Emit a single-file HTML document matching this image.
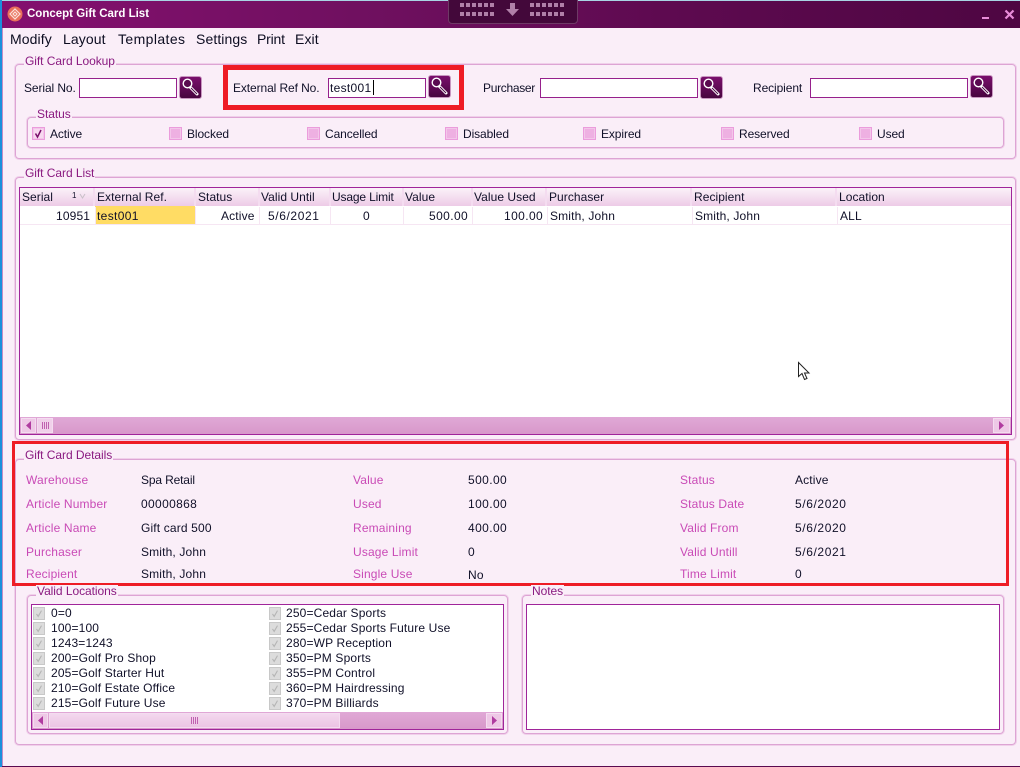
<!DOCTYPE html>
<html><head><meta charset="utf-8"><style>
html,body{margin:0;padding:0;width:1020px;height:767px;overflow:hidden;background:#faeef8}
body{position:relative;font:12px/14px "Liberation Sans",sans-serif;color:#101028;letter-spacing:.15px}
div,span,svg{position:absolute;box-sizing:border-box}
span{white-space:nowrap}
.g{border:1px solid #dda4d4;border-radius:4px;box-shadow:0 0 0 1px #f0d0ea}
.lg{color:#8a1a80;background:#faeef8;padding:0 1px 0 1px;line-height:13px;letter-spacing:-.05px}
.in{background:#fff;border:1px solid #96208c;height:20px}
.b{width:23px;height:23px;border-radius:3px;background:linear-gradient(#7a0f6c,#47053f);border:1px solid #c896c0}
.c{width:13px;height:13px;background:#eeb0e2;border:1px solid #eb9cdc;box-shadow:inset 0 0 0 1px #f3c6ea}
.k{width:12px;height:13px;background:#dcdcdc;border:1px solid #c8c8c8}
.l{color:#c94ab6}
.t{letter-spacing:-.1px}
.d{letter-spacing:.6px}
.h{top:188px;height:18px;background:linear-gradient(#fbf2f9,#edcbe7);border-right:2px solid #f4dcf0}
.hl{top:190px;letter-spacing:.05px}
.r{top:209px}
.m{font-size:14px;line-height:16px;top:31px;letter-spacing:.1px;color:#0c0c20}
.cl{position:absolute;top:207px;height:17px;width:1px;background:#f6e6f3}
</style></head><body>
<svg width="0" height="0"><defs>
<symbol id="mg" viewBox="0 0 21 21"><path d="M10.500 10.500l6.500 6.500" stroke="#fff" stroke-width="3" stroke-linecap="round"/><path d="M11 11l6 6" stroke="#47053f" stroke-width="1"/><circle cx="7.500" cy="6.500" r="4.300" fill="#5a0a50" stroke="#fff" stroke-width="1.400"/></symbol>
<symbol id="ck" viewBox="0 0 12 13"><path d="M3 7l2 3 4-7" fill="none" stroke="#b4b4b4" stroke-width="1.300"/></symbol>
</defs></svg>

<!-- title bar -->
<div style="left:0;top:0;width:1020px;height:1px;background:#a8d4e4"></div>
<div style="left:2px;top:1px;width:1018px;height:27px;background:linear-gradient(90deg,#84106f 0,#701060 35%,#5e0a50 65%,#4e0642 100%)"></div>
<div style="left:0;top:0;width:2px;height:767px;background:#1a8fdc"></div>
<div style="left:2px;top:28px;width:1px;height:738px;background:#c48cc4"></div>
<div style="left:2px;top:766px;width:1018px;height:1px;background:#5a0a50"></div>
<svg style="left:7px;top:6px" width="16" height="16" viewBox="0 0 16 16"><circle cx="8" cy="8" r="7.500" fill="#e8705c"/><path d="M8 3l5 5-5 5-5-5z M8 6l2 2-2 2-2-2z" fill="none" stroke="#fbe0d8" stroke-width="1.200"/></svg>
<span style="left:27px;top:7px;color:#fff;font-weight:bold;font-size:11.500px;letter-spacing:0">Concept Gift Card List</span>
<div style="left:448px;top:-4px;width:130px;height:28px;background:#43083a;border:1px solid #6e3a66;border-radius:4px"></div>
<svg style="left:460px;top:3px" width="110" height="16" viewBox="0 0 110 16"><g fill="#b080a8"><path d="M0 0h4v4H0zM6 0h4v4H6zM12 0h4v4h-4zM18 0h4v4h-4zM24 0h4v4h-4zM30 0h4v4h-4zM0 9h4v4H0zM6 9h4v4H6zM12 9h4v4h-4zM18 9h4v4h-4zM24 9h4v4h-4zM30 9h4v4h-4zM70 0h4v4h-4zM76 0h4v4h-4zM82 0h4v4h-4zM88 0h4v4h-4zM94 0h4v4h-4zM100 0h4v4h-4zM70 9h4v4h-4zM76 9h4v4h-4zM82 9h4v4h-4zM88 9h4v4h-4zM94 9h4v4h-4zM100 9h4v4h-4z"/><path d="M50 0h5v6h4l-6.500 7L46 6h4z"/></g></svg>
<div style="left:982px;top:17px;width:7px;height:2px;background:#e88cd8"></div>
<svg style="left:1004px;top:9px" width="11" height="11" viewBox="0 0 11 11"><path d="M1.500 1.500l8 8M9.500 1.500l-8 8" stroke="#e88cd8" stroke-width="2.200"/></svg>

<!-- menu -->
<span class="m" style="left:10px">Modify</span>
<span class="m" style="left:63px">Layout</span>
<span class="m" style="left:118px;letter-spacing:.4px">Templates</span>
<span class="m" style="left:196px">Settings</span>
<span class="m" style="left:257px;letter-spacing:-.2px">Print</span>
<span class="m" style="left:295px">Exit</span>

<!-- lookup -->
<div class="g" style="left:15px;top:64px;width:1001px;height:95px"></div>
<span class="lg" style="left:24px;top:55px">Gift Card Lookup</span>
<span class="t" style="left:24px;top:81px">Serial No.</span>
<div class="in" style="left:79px;top:78px;width:98px"></div>
<div class="b" style="left:179px;top:76px"><svg width="21" height="21"><use href="#mg"/></svg></div>
<span class="t" style="left:233px;top:81px">External Ref No.</span>
<div class="in" style="left:328px;top:78px;width:98px"></div>
<span style="left:330px;top:81px;letter-spacing:.3px">test001</span>
<div style="left:373px;top:80px;width:1px;height:15px;background:#000"></div>
<div class="b" style="left:428px;top:75px"><svg width="21" height="21"><use href="#mg"/></svg></div>
<div style="left:223px;top:65px;width:241px;height:45px;border:5px solid #ee1c25"></div>
<span class="t" style="left:483px;top:81px;letter-spacing:-.3px">Purchaser</span>
<div class="in" style="left:540px;top:78px;width:158px"></div>
<div class="b" style="left:700px;top:76px"><svg width="21" height="21"><use href="#mg"/></svg></div>
<span class="t" style="left:753px;top:81px">Recipient</span>
<div class="in" style="left:810px;top:78px;width:158px"></div>
<div class="b" style="left:970px;top:75px"><svg width="21" height="21"><use href="#mg"/></svg></div>

<div class="g" style="left:27px;top:117px;width:977px;height:31px"></div>
<span class="lg" style="left:36px;top:108px">Status</span>
<div class="c" style="left:32px;top:127px;background:#f8d8f0"></div>
<svg style="left:32px;top:127px" width="13" height="13" viewBox="0 0 13 13"><path d="M3.500 6.500l2 3.500 3.500-7" fill="none" stroke="#7a0f6c" stroke-width="1.500"/></svg>
<span class="t" style="left:50px;top:127px">Active</span>
<div class="c" style="left:169px;top:127px"></div><span class="t" style="left:187px;top:127px">Blocked</span>
<div class="c" style="left:307px;top:127px"></div><span class="t" style="left:325px;top:127px">Cancelled</span>
<div class="c" style="left:445px;top:127px"></div><span class="t" style="left:463px;top:127px">Disabled</span>
<div class="c" style="left:583px;top:127px"></div><span class="t" style="left:601px;top:127px">Expired</span>
<div class="c" style="left:721px;top:127px"></div><span class="t" style="left:739px;top:127px">Reserved</span>
<div class="c" style="left:859px;top:127px"></div><span class="t" style="left:877px;top:127px">Used</span>

<!-- list -->
<div class="g" style="left:15px;top:177px;width:1001px;height:263px"></div>
<span class="lg" style="left:24px;top:167px">Gift Card List</span>
<div style="left:19px;top:187px;width:993px;height:248px;background:#fff;border:1px solid #a0249a"></div>
<div class="h" style="left:20px;width:75px"></div>
<div class="h" style="left:95px;width:101px"></div>
<div class="h" style="left:196px;width:64px"></div>
<div class="h" style="left:260px;width:71px"></div>
<div class="h" style="left:331px;width:73px"></div>
<div class="h" style="left:404px;width:69px"></div>
<div class="h" style="left:473px;width:74px"></div>
<div class="h" style="left:547px;width:145px"></div>
<div class="h" style="left:692px;width:145px"></div>
<div class="h" style="left:837px;width:174px;border-right:0"></div>
<span class="hl" style="left:22px">Serial</span>
<span style="left:72px;top:191px;font-size:8px;line-height:10px">1</span>
<svg style="left:79px;top:193px" width="7" height="6" viewBox="0 0 7 6"><path d="M1 1l2.500 4L6 1" fill="none" stroke="#c8c0c8"/></svg>
<span class="hl" style="left:97px">External Ref.</span>
<span class="hl" style="left:198px">Status</span>
<span class="hl" style="left:261px">Valid Until</span>
<span class="hl" style="left:332px;letter-spacing:-.15px">Usage Limit</span>
<span class="hl" style="left:405px">Value</span>
<span class="hl" style="left:474px">Value Used</span>
<span class="hl" style="left:549px">Purchaser</span>
<span class="hl" style="left:694px">Recipient</span>
<span class="hl" style="left:839px">Location</span>
<div style="left:95px;top:206px;width:100px;height:18px;background:#ffdc64"></div>
<div style="left:20px;top:224px;width:991px;height:1px;background:#f6e6f3"></div>
<div class="cl" style="left:95px"></div><div class="cl" style="left:195px"></div><div class="cl" style="left:259px"></div><div class="cl" style="left:330px"></div><div class="cl" style="left:403px"></div><div class="cl" style="left:472px"></div><div class="cl" style="left:547px"></div><div class="cl" style="left:692px"></div><div class="cl" style="left:837px"></div>
<span class="r" style="left:56px">10951</span>
<span class="r" style="left:97px;letter-spacing:.35px">test001</span>
<span class="r" style="left:221px">Active</span>
<span class="r d" style="left:268px">5/6/2021</span>
<span class="r" style="left:363px">0</span>
<span class="r" style="left:429px;letter-spacing:.4px">500.00</span>
<span class="r" style="left:504px;letter-spacing:.4px">100.00</span>
<span class="r" style="left:550px">Smith, John</span>
<span class="r" style="left:695px">Smith, John</span>
<span class="r" style="left:840px">ALL</span>
<div style="left:20px;top:417px;width:991px;height:17px;background:linear-gradient(#e0a8d6,#d898ca)"></div>
<div style="left:21px;top:418px;width:15px;height:15px;background:#eec8e6;border:1px solid #f4dcf0"></div>
<svg style="left:24px;top:420px" width="9" height="11"><path d="M7 1v9L2 5.500z" fill="#b03ca0"/></svg>
<div style="left:37px;top:418px;width:16px;height:15px;background:#f0d0ea;border:1px solid #f4dcf0"></div>
<svg style="left:41px;top:421px" width="9" height="9"><path d="M1.500 1v7M3.500 1v7M5.500 1v7M7.500 1v7" stroke="#c060b0"/></svg>
<div style="left:993px;top:418px;width:17px;height:15px;background:#eec8e6;border:1px solid #f4dcf0"></div>
<svg style="left:997px;top:420px" width="9" height="11"><path d="M2 1v9l5-4.500z" fill="#b03ca0"/></svg>
<svg style="left:797px;top:361px" width="14" height="20" viewBox="0 0 14 20"><path d="M1.500 1.500v14l3.500-3 2.500 6 2.500-1-2.500-5.500h4.500z" fill="#fff" stroke="#222"/></svg>

<!-- details -->
<div class="g" style="left:15px;top:459px;width:1001px;height:286px"></div>
<span class="lg" style="left:24px;top:449px">Gift Card Details</span>
<span class="l" style="left:26px;top:473px">Warehouse</span><span style="left:141px;top:473px;letter-spacing:-.15px">Spa Retail</span>
<span class="l" style="left:26px;top:497px">Article Number</span><span style="left:141px;top:497px;letter-spacing:.35px">00000868</span>
<span class="l" style="left:26px;top:521px">Article Name</span><span style="left:141px;top:521px">Gift card 500</span>
<span class="l" style="left:26px;top:545px">Purchaser</span><span style="left:141px;top:545px">Smith, John</span>
<span class="l" style="left:26px;top:567px">Recipient</span><span style="left:141px;top:567px">Smith, John</span>
<span class="l" style="left:353px;top:473px">Value</span><span style="left:468px;top:473px;letter-spacing:.4px">500.00</span>
<span class="l" style="left:353px;top:497px">Used</span><span style="left:468px;top:497px;letter-spacing:.4px">100.00</span>
<span class="l" style="left:353px;top:521px">Remaining</span><span style="left:468px;top:521px;letter-spacing:.4px">400.00</span>
<span class="l" style="left:353px;top:545px">Usage Limit</span><span style="left:468px;top:545px">0</span>
<span class="l" style="left:353px;top:567px">Single Use</span><span style="left:468px;top:568px">No</span>
<span class="l" style="left:680px;top:473px">Status</span><span style="left:795px;top:473px">Active</span>
<span class="l" style="left:680px;top:497px">Status Date</span><span class="d" style="left:795px;top:497px">5/6/2020</span>
<span class="l" style="left:680px;top:521px">Valid From</span><span class="d" style="left:795px;top:521px">5/6/2020</span>
<span class="l" style="left:680px;top:545px">Valid Untill</span><span class="d" style="left:795px;top:545px">5/6/2021</span>
<span class="l" style="left:680px;top:567px">Time Limit</span><span style="left:795px;top:567px">0</span>
<div style="left:12px;top:441px;width:997px;height:145px;border:3px solid #ee1c25"></div>

<!-- locations -->
<div class="g" style="left:27px;top:595px;width:481px;height:139px"></div>
<span class="lg" style="left:36px;top:585px">Valid Locations</span>
<div style="left:31px;top:604px;width:473px;height:126px;background:#fff;border:1px solid #a0249a"></div>
<div class="k" style="left:33px;top:607px"><svg width="10" height="11"><use href="#ck"/></svg></div><span style="left:51px;top:606px">0=0</span>
<div class="k" style="left:33px;top:622px"><svg width="10" height="11"><use href="#ck"/></svg></div><span style="left:51px;top:621px">100=100</span>
<div class="k" style="left:33px;top:637px"><svg width="10" height="11"><use href="#ck"/></svg></div><span style="left:51px;top:636px">1243=1243</span>
<div class="k" style="left:33px;top:652px"><svg width="10" height="11"><use href="#ck"/></svg></div><span style="left:51px;top:651px">200=Golf Pro Shop</span>
<div class="k" style="left:33px;top:667px"><svg width="10" height="11"><use href="#ck"/></svg></div><span style="left:51px;top:666px">205=Golf Starter Hut</span>
<div class="k" style="left:33px;top:682px"><svg width="10" height="11"><use href="#ck"/></svg></div><span style="left:51px;top:681px">210=Golf Estate Office</span>
<div class="k" style="left:33px;top:697px"><svg width="10" height="11"><use href="#ck"/></svg></div><span style="left:51px;top:696px">215=Golf Future Use</span>
<div class="k" style="left:269px;top:607px"><svg width="10" height="11"><use href="#ck"/></svg></div><span style="left:286px;top:606px">250=Cedar Sports</span>
<div class="k" style="left:269px;top:622px"><svg width="10" height="11"><use href="#ck"/></svg></div><span style="left:286px;top:621px">255=Cedar Sports Future Use</span>
<div class="k" style="left:269px;top:637px"><svg width="10" height="11"><use href="#ck"/></svg></div><span style="left:286px;top:636px">280=WP Reception</span>
<div class="k" style="left:269px;top:652px"><svg width="10" height="11"><use href="#ck"/></svg></div><span style="left:286px;top:651px">350=PM Sports</span>
<div class="k" style="left:269px;top:667px"><svg width="10" height="11"><use href="#ck"/></svg></div><span style="left:286px;top:666px">355=PM Control</span>
<div class="k" style="left:269px;top:682px"><svg width="10" height="11"><use href="#ck"/></svg></div><span style="left:286px;top:681px">360=PM Hairdressing</span>
<div class="k" style="left:269px;top:697px"><svg width="10" height="11"><use href="#ck"/></svg></div><span style="left:286px;top:696px">370=PM Billiards</span>
<div style="left:32px;top:712px;width:471px;height:17px;background:linear-gradient(#e0a8d6,#d898ca)"></div>
<div style="left:33px;top:713px;width:15px;height:15px;background:#eec8e6;border:1px solid #f4dcf0"></div>
<svg style="left:36px;top:715px" width="9" height="11"><path d="M7 1v9L2 5.500z" fill="#b03ca0"/></svg>
<div style="left:49px;top:713px;width:291px;height:15px;background:linear-gradient(#f3d8ee,#ecc4e4);border:1px solid #f4dcf0"></div>
<svg style="left:190px;top:716px" width="9" height="9"><path d="M1.500 1v7M3.500 1v7M5.500 1v7M7.500 1v7" stroke="#c060b0"/></svg>
<div style="left:486px;top:713px;width:16px;height:15px;background:#eec8e6;border:1px solid #f4dcf0"></div>
<svg style="left:490px;top:715px" width="9" height="11"><path d="M2 1v9l5-4.500z" fill="#b03ca0"/></svg>

<!-- notes -->
<div class="g" style="left:522px;top:595px;width:482px;height:139px"></div>
<span class="lg" style="left:531px;top:585px">Notes</span>
<div style="left:526px;top:604px;width:474px;height:126px;background:#fff;border:1px solid #a0249a"></div>
</body></html>
